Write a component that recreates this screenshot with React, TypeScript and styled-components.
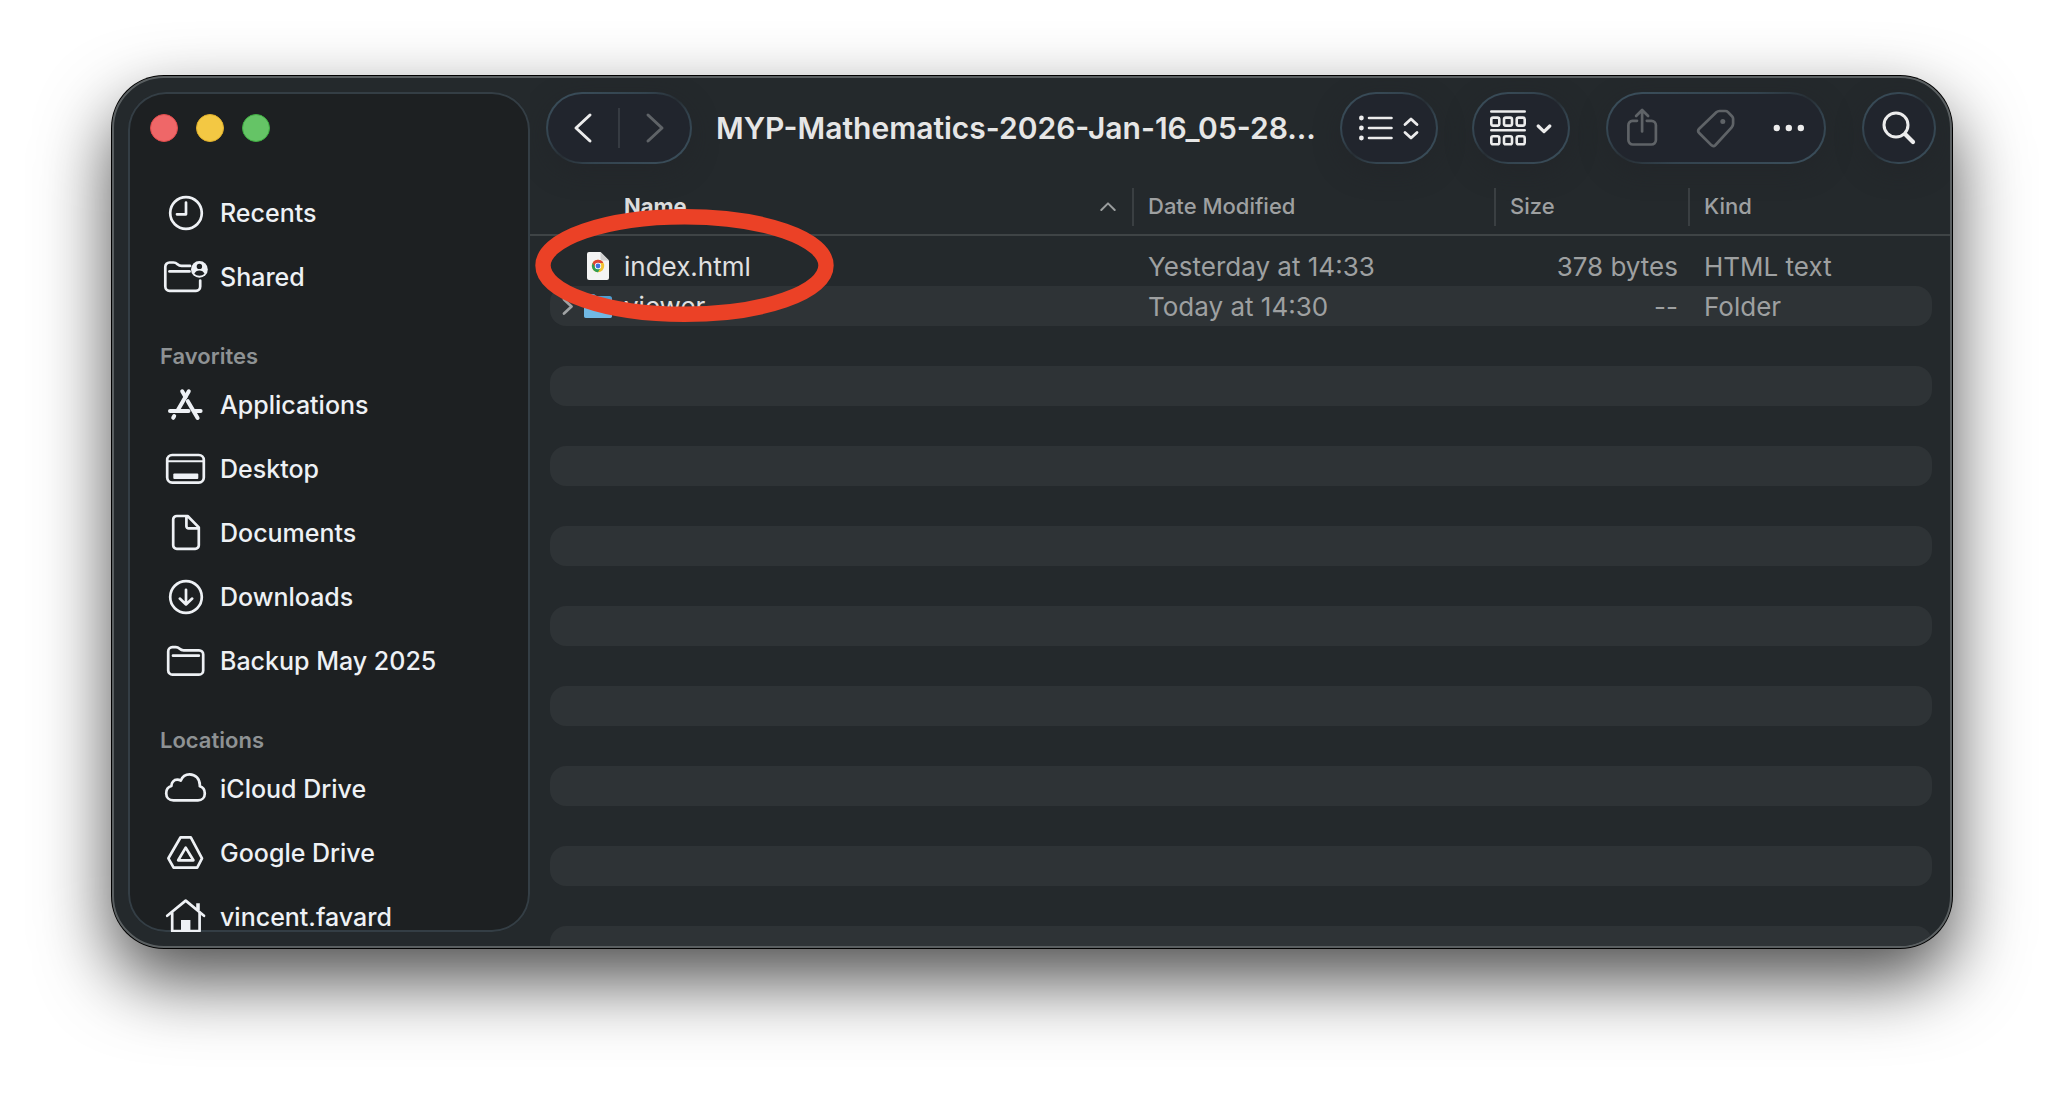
import React from 'react';
import styled, { createGlobalStyle, css } from 'styled-components';

const color = {
  window: '#24292c',
  sidebar: '#1d2022',
  stripe: '#2e3336',
  pill: '#21252d',
  bright: '#eef1f5',
  text: '#e0e0e0',
  muted: '#9ea0a1',
  line: '#3f4446',
};

const Global = createGlobalStyle`
  *, *::before, *::after { box-sizing: border-box; }
  body {
    margin: 0;
    background: #fff;
    font-family: Inter, "Liberation Sans", sans-serif;
    font-size: 25px;
    font-weight: 500;
    color: ${color.text};
  }
  button {
    font: inherit;
    color: inherit;
    background: none;
    border: 0;
    padding: 0;
    margin: 0;
    cursor: default;
  }
  a { color: inherit; text-decoration: none; }
  svg { display: block; flex: none; }
`;

const Desktop = styled.div`
  display: flex;
  min-width: 1500px;
  height: 100vh;
  padding: 76px 112px 148px;
`;

const Window = styled.div`
  flex: 1;
  min-width: 0;
  display: flex;
  overflow: hidden;
  background: ${color.window};
  border: 2px solid #5a5f61;
  border-radius: 52px;
  box-shadow: 0 0 0 1px #000, 0 32px 72px rgba(0, 0, 0, 0.7);
`;

/* ---------- sidebar ---------- */

const Sidebar = styled.aside`
  flex: none;
  width: 402px;
  margin: 14px 0 14px 14px;
  overflow: hidden;
  background: ${color.sidebar};
  border-radius: 38px;
  box-shadow: inset 0 0 0 2px #343e45;
`;

const TrafficLights = styled.div`
  display: flex;
  gap: 18px;
  padding: 22px 22px 39px;
`;

const Light = styled.button<{ $fill: string; $edge: string }>`
  width: 28px;
  height: 28px;
  border-radius: 50%;
  background: ${(p) => p.$fill};
  border: 1px solid ${(p) => p.$edge};
`;

const SectionTitle = styled.h2`
  height: 64px;
  margin: 0;
  padding: 30px 32px 0;
  font-size: 22px;
  line-height: 34px;
  font-weight: 600;
  color: #8e9294;
`;

const List = styled.ul`
  list-style: none;
  margin: 0;
  padding: 0;
`;

const Item = styled.a`
  display: flex;
  align-items: center;
  gap: 10px;
  height: 64px;
  padding: 0 34px;
  color: ${color.bright};
  white-space: nowrap;
`;

const Glyph = styled.svg.attrs({ 'aria-hidden': true })`
  fill: none;
  stroke: currentColor;
  stroke-width: 2.7;
  stroke-linecap: round;
  stroke-linejoin: round;
`;

/* ---------- toolbar ---------- */

const Main = styled.main`
  position: relative;
  flex: 1;
  min-width: 0;
  display: flex;
  flex-direction: column;
  overflow: hidden;
`;

const Toolbar = styled.header`
  flex: none;
  display: flex;
  align-items: center;
  gap: 36px;
  padding: 14px 14px 16px 16px;
`;

const Heading = styled.div`
  flex: 1;
  min-width: 0;
  display: flex;
  align-items: center;
  gap: 24px;
`;

const Title = styled.h1`
  margin: 0;
  min-width: 0;
  font-size: 30px;
  line-height: 40px;
  font-weight: 600;
  white-space: nowrap;
  color: #e6e6e6;
`;

const Views = styled.div`
  display: flex;
  gap: 34px;
`;

const pill = css`
  flex: none;
  display: flex;
  align-items: center;
  justify-content: center;
  height: 72px;
  border: 2px solid transparent;
  border-radius: 36px;
  background:
    linear-gradient(${color.pill}, ${color.pill}) padding-box,
    linear-gradient(to bottom right, #3c505d, #33434e 35%, #272e34 50%, #33434e 65%, #3c505d) border-box;
  box-shadow: 0 8px 24px rgba(34, 36, 39, 0.5);
`;

const PillGroup = styled.div<{ $width: number }>`
  ${pill}
  width: ${(p) => p.$width}px;
`;

const PillButton = styled.button<{ $width: number }>`
  ${pill}
  gap: 10px;
  width: ${(p) => p.$width}px;
  color: #ececec;
`;

const Segment = styled.button`
  flex: 1;
  height: 100%;
  display: flex;
  align-items: center;
  justify-content: center;
  color: #ececec;
  &:disabled { color: #5f6367; }
`;

const Divider = styled.span`
  width: 2px;
  height: 40px;
  background: #363b42;
`;

/* ---------- file list ---------- */

const Table = styled.table`
  display: block;
  flex: none;
  font-size: 26px;
  font-weight: 400;
  thead, tbody { display: block; }
  tbody { padding: 10px 18px 0 20px; }
`;

const rowGrid = css`
  display: grid;
  grid-template-columns: minmax(0, 1fr) 362px 194px 244px;
  align-items: center;
`;

const HeadRow = styled.tr`
  ${rowGrid}
  height: 56px;
  padding: 0 18px 0 20px;
  border-bottom: 2px solid ${color.line};
`;

const HeadCell = styled.th`
  padding: 0;
  height: 38px;
  font-size: 22px;
  & + & { border-left: 2px solid #3a3f42; }
`;

const SortButton = styled.button<{ $active?: boolean }>`
  display: flex;
  align-items: center;
  justify-content: space-between;
  width: 100%;
  height: 36px;
  padding: ${(p) => (p.$active ? '0 16px 0 74px' : '0 14px')};
  font-weight: ${(p) => (p.$active ? 700 : 500)};
  color: ${(p) => (p.$active ? '#dcdcdc' : color.muted)};
`;

const Row = styled.tr<{ $striped?: boolean }>`
  ${rowGrid}
  height: 40px;
  border-radius: 16px;
  background: ${(p) => (p.$striped ? color.stripe : 'transparent')};
`;

const Cell = styled.td<{ $align?: 'right' }>`
  padding: 2px 10px 0 16px;
  line-height: 38px;
  text-align: ${(p) => p.$align ?? 'left'};
  color: ${color.muted};
  white-space: nowrap;
`;

const NameCell = styled.td`
  display: flex;
  align-items: center;
  height: 40px;
  padding: 0 0 0 8px;
  color: ${color.text};
`;

const FileName = styled.span`
  padding-top: 2px;
  line-height: 38px;
`;

const Disclosure = styled.button`
  width: 20px;
  height: 40px;
  display: flex;
  align-items: center;
  justify-content: center;
  color: #a0a3a4;
`;

const DisclosureSpace = styled.span`
  width: 20px;
`;

const FileIcon = styled.span`
  display: flex;
  justify-content: center;
  width: 32px;
  margin: 0 10px 0 4px;
`;

const EmptyRows = styled.div`
  flex: 1;
  min-height: 0;
  overflow: hidden;
  padding: 0 18px 0 20px;
`;

const EmptyRow = styled.div`
  height: 40px;
  border-radius: 16px;
  &:nth-child(even) { background: ${color.stripe}; }
`;

const Annotation = styled.svg`
  position: absolute;
  left: 5px;
  top: 131px;
  pointer-events: none;
`;

/* ---------- icons ---------- */

const icons: Record<string, React.ReactNode> = {
  recents: (
    <>
      <circle cx="24" cy="24" r="15.8" />
      <path d="M24 13.5V25.3H15" />
    </>
  ),
  shared: (
    <>
      <path d="M28 12.9H19.5c-2 0-2.7-.5-4-1.7-1.3-1.2-2.2-1.7-4-1.7H7.5a4.2 4.2 0 0 0-4.2 4.2V33.6a4.2 4.2 0 0 0 4.2 4.2H34a4.2 4.2 0 0 0 4.2-4.2V27.5" />
      <path d="M7.5 18.4H27.5" />
      <circle cx="37.4" cy="16.4" r="8.4" fill="currentColor" stroke="none" />
      <circle cx="37.4" cy="13.4" r="2.7" fill={color.sidebar} stroke="none" />
      <path
        d="M32.3 20.8c.8-2.2 2.8-3.4 5.1-3.4s4.3 1.2 5.1 3.4c-1.3 1.3-3.1 1.9-5.1 1.9s-3.8-.6-5.1-1.9z"
        fill={color.sidebar}
        stroke="none"
      />
    </>
  ),
  applications: (
    <g strokeWidth="4">
      <path d="M20.2 10.3l3.3 5.7" />
      <path d="M26.8 10.3L15.6 29.5" />
      <path d="M8 30H26.5" />
      <path d="M25.8 20.2L35.6 37" />
      <path d="M32.5 30H38.6" />
      <path d="M12.2 35l-1 1.8" />
    </g>
  ),
  desktop: (
    <>
      <rect x="5.2" y="10" width="36.6" height="27.6" rx="5" />
      <path d="M6 16.2H41" strokeWidth="2" />
      <rect x="11.3" y="28.4" width="25" height="5.6" rx="1" fill="currentColor" stroke="none" />
    </>
  ),
  documents: (
    <path d="M25.6 7H14.8a3.6 3.6 0 0 0-3.6 3.6V36.2a3.6 3.6 0 0 0 3.6 3.6H33.2a3.6 3.6 0 0 0 3.6-3.6V18.4zM24.4 7.4V17.2a2.2 2.2 0 0 0 2.2 2.2H36.4" />
  ),
  downloads: (
    <>
      <circle cx="24" cy="24" r="15.8" />
      <path d="M24 16.8V31M17.8 25.6L24 31.4l6.2-5.8" />
    </>
  ),
  folder: (
    <>
      <path d="M6.2 14.4a4.2 4.2 0 0 1 4.2-4.2h3.4c1.8 0 2.6.5 3.9 1.6 1.2 1.1 2 1.5 3.9 1.5H37a4.2 4.2 0 0 1 4.2 4.2V33.4a4.2 4.2 0 0 1-4.2 4.2H10.4a4.2 4.2 0 0 1-4.2-4.2z" />
      <path d="M11 18.7H36.8" />
    </>
  ),
  cloud: (
    <path d="M11.5 35.4C7 35.4 4.2 32.4 4.2 28.2 4.2 24.6 6.3 21.9 9.4 21 9.3 17.5 11.8 14.7 15.2 14.7 16.6 14.7 17.8 15 18.8 15.6 20.3 11.7 23.5 9.3 27.6 9.3 33.6 9.3 37.8 14 37.8 20V21.2C41 22.2 42.8 25 42.8 28.4 42.8 32.4 40 35.4 36 35.4Z" />
  ),
  drive: (
    <>
      <path d="M18.6 8.3H28.8L40 29.3 35.2 38.7H11.6L6.4 29.3Z" />
      <path d="M23.7 18.6L16.2 31.3H31.4Z" />
    </>
  ),
  home: (
    <>
      <path d="M5.2 22.8L23.7 7.6 42 22.8" />
      <path d="M10.2 20V38H37.6V20" />
      <path d="M36 10.3V17" strokeWidth="3.6" strokeLinecap="butt" />
      <rect x="19" y="27" width="9.4" height="11" fill="currentColor" stroke="none" />
    </>
  ),
};

function SidebarItem({ icon, label }: { icon: string; label: string }) {
  return (
    <li>
      <Item href="#">
        <Glyph width="48" height="48" viewBox="0 0 48 48">
          {icons[icon]}
        </Glyph>
        {label}
      </Item>
    </li>
  );
}

const BackIcon = () => (
  <Glyph width="20" height="32" viewBox="0 0 20 32">
    <path d="M17 3L3 16 17 29" strokeWidth="3" />
  </Glyph>
);

const ForwardIcon = () => (
  <Glyph width="20" height="32" viewBox="0 0 20 32">
    <path d="M3 3L17 16 3 29" strokeWidth="3" />
  </Glyph>
);

const ListIcon = () => (
  <Glyph width="34" height="26" viewBox="0 0 34 26">
    <g fill="currentColor" stroke="none">
      <circle cx="2.4" cy="3" r="2.4" />
      <circle cx="2.4" cy="13" r="2.4" />
      <circle cx="2.4" cy="23" r="2.4" />
    </g>
    <path d="M10 3H32.5M10 13H32.5M10 23H32.5" strokeWidth="2.6" />
  </Glyph>
);

const UpDownIcon = () => (
  <Glyph width="16" height="24" viewBox="0 0 16 24">
    <path d="M2 8.5L8 3 14 8.5M2 16.5L8 22 14 16.5" strokeWidth="2.8" />
  </Glyph>
);

const GroupIcon = () => (
  <Glyph width="36" height="36" viewBox="0 0 36 36">
    <path d="M1.3 1.5H34.7M1.3 20.3H34.7" strokeWidth="2.6" />
    {[7.6, 26.2].map((y) =>
      [1.3, 14, 26.7].map((x) => (
        <rect key={`${x}-${y}`} x={x} y={y} width="8" height="8" rx="1.8" strokeWidth="2.6" />
      )),
    )}
  </Glyph>
);

const DownIcon = () => (
  <Glyph width="16" height="12" viewBox="0 0 16 12">
    <path d="M2.2 4L8 9.6 13.8 4" strokeWidth="3.2" />
  </Glyph>
);

const ShareIcon = () => (
  <Glyph width="34" height="40" viewBox="0 0 34 40">
    <path d="M10 12.8H5.5A4.5 4.5 0 0 0 1.4 17.3V32A4.5 4.5 0 0 0 5.9 36.500H24.4A4.5 4.5 0 0 0 28.9 32V17.3A4.5 4.5 0 0 0 24.4 12.8H19.8" />
    <path d="M15.1 23.5V2.5M9.1 8L15.1 2 21.1 8" />
  </Glyph>
);

const TagIcon = () => (
  <Glyph width="40" height="40" viewBox="0 0 40 40">
    <path d="M3.2 20.8L20.3 4.2A5 5 0 0 1 23.6 3H29.3A3.8 3.8 0 0 1 32 4.1L36 8.2A3.8 3.8 0 0 1 37.1 11V15.8A5 5 0 0 1 35.7 19.3L19.5 37A3 3 0 0 1 15.3 37.1L3.2 25A3 3 0 0 1 3.2 20.8Z" />
    <circle cx="26.8" cy="13.6" r="2.5" fill="currentColor" stroke="none" />
  </Glyph>
);

const MoreIcon = () => (
  <Glyph width="32" height="8" viewBox="0 0 32 8">
    <g fill="currentColor" stroke="none">
      <circle cx="4.800" cy="4" r="3.2" />
      <circle cx="16.800" cy="4" r="3.2" />
      <circle cx="28.8" cy="4" r="3.2" />
    </g>
  </Glyph>
);

const SearchIcon = () => (
  <Glyph width="34" height="34" viewBox="0 0 34 34">
    <circle cx="14" cy="14" r="12" strokeWidth="3" />
    <path d="M23.5 23.5L31 31" strokeWidth="4.2" />
  </Glyph>
);

const SortIcon = () => (
  <Glyph width="16" height="10" viewBox="0 0 16 10">
    <path d="M1.3 9L8 2.4 14.7 9" stroke="#9a9d9e" strokeWidth="2" />
  </Glyph>
);

const HtmlFileIcon = () => (
  <svg width="24" height="30" viewBox="0 0 24 30" aria-hidden="true">
    <path d="M3 1H14.5L23 9.5V27a2 2 0 0 1-2 2H3a2 2 0 0 1-2-2V3a2 2 0 0 1 2-2z" fill="#f4f4f4" />
    <path d="M14.5 1L23 9.5H16.5a2 2 0 0 1-2-2z" fill="#cfcfcf" />
    <circle cx="12" cy="15" r="6.2" fill="#f4c433" />
    <path d="M12 15L6.63 11.9A6.2 6.2 0 0 0 12 21.2L14.7 16.5z" fill="#2f9e55" />
    <path d="M6.63 11.9A6.2 6.2 0 0 1 17.37 11.9H12L9.3 16.5z" fill="#dd4437" />
    <circle cx="12" cy="15" r="3.2" fill="#fff" />
    <circle cx="12" cy="15" r="2.4" fill="#3d6fe0" />
  </svg>
);

const FolderIcon = () => (
  <svg width="28" height="26" viewBox="0 0 28 26" aria-hidden="true">
    <path
      d="M0 3.5A2.5 2.5 0 0 1 2.5 1H9.5c1.5 0 2 2 3.5 2H25.5A2.5 2.5 0 0 1 28 5.5V22.5A2.5 2.5 0 0 1 25.5 25H2.5A2.5 2.5 0 0 1 0 22.5z"
      fill="#4f9fd0"
    />
    <path d="M0 6.5H28V22.5A2.5 2.5 0 0 1 25.5 25H2.5A2.5 2.5 0 0 1 0 22.5z" fill="#71b9e4" />
  </svg>
);

const favorites = [
  ['applications', 'Applications'],
  ['desktop', 'Desktop'],
  ['documents', 'Documents'],
  ['downloads', 'Downloads'],
  ['folder', 'Backup May 2025'],
];

const locations = [
  ['cloud', 'iCloud Drive'],
  ['drive', 'Google Drive'],
  ['home', 'vincent.favard'],
];

const files = [
  { name: 'index.html', date: 'Yesterday at 14:33', size: '378 bytes', kind: 'HTML text' },
  { name: 'viewer', date: 'Today at 14:30', size: '--', kind: 'Folder' },
];

export default function App() {
  return (
    <>
      <Global />
      <Desktop>
        <Window>
          <Sidebar>
            <TrafficLights>
              <Light aria-label="Close" $fill="#ef6768" $edge="#e04a4b" />
              <Light aria-label="Minimize" $fill="#f3c843" $edge="#e0b02c" />
              <Light aria-label="Zoom" $fill="#65c466" $edge="#3fae42" />
            </TrafficLights>
            <List>
              <SidebarItem icon="recents" label="Recents" />
              <SidebarItem icon="shared" label="Shared" />
            </List>
            <SectionTitle>Favorites</SectionTitle>
            <List>
              {favorites.map(([icon, label]) => (
                <SidebarItem key={label} icon={icon} label={label} />
              ))}
            </List>
            <SectionTitle>Locations</SectionTitle>
            <List>
              {locations.map(([icon, label]) => (
                <SidebarItem key={label} icon={icon} label={label} />
              ))}
            </List>
          </Sidebar>

          <Main>
            <Toolbar>
              <Heading>
                <PillGroup $width={146}>
                  <Segment aria-label="Back"><BackIcon /></Segment>
                  <Divider />
                  <Segment aria-label="Forward" disabled><ForwardIcon /></Segment>
                </PillGroup>
                <Title>MYP-Mathematics-2026-Jan-16_05-28...</Title>
              </Heading>
              <Views>
                <PillButton $width={98} aria-label="View as list">
                  <ListIcon />
                  <UpDownIcon />
                </PillButton>
                <PillButton $width={98} aria-label="Group items">
                  <GroupIcon />
                  <DownIcon />
                </PillButton>
              </Views>
              <PillGroup $width={220}>
                <Segment aria-label="Share" disabled><ShareIcon /></Segment>
                <Segment aria-label="Tags" disabled><TagIcon /></Segment>
                <Segment aria-label="More"><MoreIcon /></Segment>
              </PillGroup>
              <PillButton $width={74} aria-label="Search">
                <SearchIcon />
              </PillButton>
            </Toolbar>

            <Table>
              <thead>
                <HeadRow>
                  <HeadCell scope="col" aria-sort="ascending">
                    <SortButton $active>Name<SortIcon /></SortButton>
                  </HeadCell>
                  <HeadCell scope="col"><SortButton>Date Modified</SortButton></HeadCell>
                  <HeadCell scope="col"><SortButton>Size</SortButton></HeadCell>
                  <HeadCell scope="col"><SortButton>Kind</SortButton></HeadCell>
                </HeadRow>
              </thead>
              <tbody>
                {files.map((file, i) => (
                  <Row key={file.name} $striped={i % 2 === 1}>
                    <NameCell>
                      {file.kind === 'Folder' ? (
                        <Disclosure aria-label={`Expand ${file.name}`}>
                          <Glyph width="12" height="18" viewBox="0 0 12 18">
                            <path d="M2 2.5L9.5 9.5 2 16.5" />
                          </Glyph>
                        </Disclosure>
                      ) : (
                        <DisclosureSpace />
                      )}
                      <FileIcon>{file.kind === 'Folder' ? <FolderIcon /> : <HtmlFileIcon />}</FileIcon>
                      <FileName>{file.name}</FileName>
                    </NameCell>
                    <Cell>{file.date}</Cell>
                    <Cell $align="right">{file.size}</Cell>
                    <Cell>{file.kind}</Cell>
                  </Row>
                ))}
              </tbody>
            </Table>
            <EmptyRows aria-hidden="true">
              {Array.from({ length: 40 }, (_, i) => (
                <EmptyRow key={i} />
              ))}
            </EmptyRows>

            <Annotation width="299" height="113" viewBox="0 0 299 113" aria-hidden="true">
              <ellipse cx="149.5" cy="56.5" rx="141.5" ry="48.8" fill="none" stroke="#eb4126" strokeWidth="15.4" />
            </Annotation>
          </Main>
        </Window>
      </Desktop>
    </>
  );
}
